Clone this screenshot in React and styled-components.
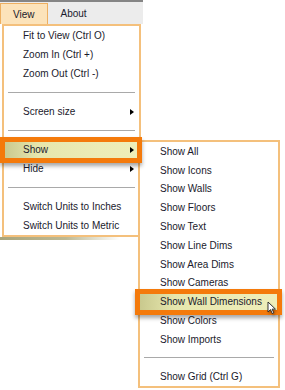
import styled, { createGlobalStyle } from "styled-components";

const GlobalStyle = createGlobalStyle`
  html, body {
    margin: 0;
    padding: 0;
    background: #fff;
  }
  body {
    font-family: "Liberation Sans", Arial, sans-serif;
    width: 285px;
    height: 390px;
    overflow: hidden;
  }
`;

const mainItems = [
  { label: "Fit to View (Ctrl O)" },
  { label: "Zoom In (Ctrl +)" },
  { label: "Zoom Out (Ctrl -)" },
  { sep: true },
  { label: "Screen size", arrow: true },
  { sep: true },
  { label: "Show", arrow: true, active: true, open: true },
  { label: "Hide", arrow: true },
  { sep: true },
  { label: "Switch Units to Inches" },
  { label: "Switch Units to Metric" },
];

const showItems = [
  { label: "Show All" },
  { label: "Show Icons" },
  { label: "Show Walls" },
  { label: "Show Floors" },
  { label: "Show Text" },
  { label: "Show Line Dims" },
  { label: "Show Area Dims" },
  { label: "Show Cameras" },
  { label: "Show Wall Dimensions", active: true, cursor: true },
  { label: "Show Colors" },
  { label: "Show Imports" },
  { sep: true },
  { label: "Show Grid (Ctrl G)" },
];

const Cursor = () => (
  <CursorIcon width="10" height="14" viewBox="0 0 10 14">
    <path
      d="M1 1 L1 11 L3.5 8.6 L5.3 12.6 L6.8 11.9 L5.1 8.1 L8.4 8.1 Z"
      fill="#fff"
      stroke="#222"
      strokeWidth="0.9"
      strokeLinejoin="round"
    />
  </CursorIcon>
);

const SubMenu = () => (
  <SubPanel>
    {showItems.map((item, i) =>
      item.sep ? (
        <Separator key={i} $h={18.8} />
      ) : (
        <SubItem key={i} $active={item.active}>
          {item.label}
          {item.cursor && <Cursor />}
        </SubItem>
      )
    )}
  </SubPanel>
);

export default function App() {
  return (
    <>
      <GlobalStyle />
      <Page>
        <MenuBar>
          <Tab $open>View</Tab>
          <Tab>About</Tab>
        </MenuBar>
        <DeskStrip />
        <MainPanel>
          {mainItems.map((item, i) =>
            item.sep ? (
              <Separator key={i} $h={19} />
            ) : (
              <MainItem key={i} $active={item.active}>
                <span>{item.label}</span>
                {item.arrow && <Arrow />}
                {item.open && <SubMenu />}
              </MainItem>
            )
          )}
        </MainPanel>
      </Page>
    </>
  );
}

const Page = styled.div`
  position: relative;
  width: 285px;
  height: 390px;
  background: #fff;
`;

const MenuBar = styled.div`
  display: flex;
  align-items: stretch;
  width: 143px;
  height: 24px;
  box-sizing: border-box;
  border-top: 2px solid #858585;
  padding-top: 1px;
  background: #ececec;
`;

const Tab = styled.div`
  display: flex;
  align-items: center;
  padding: 0 13px;
  font-size: 10px;
  color: #1a1a2c;
  box-sizing: border-box;
  ${(p) =>
    p.$open &&
    `
    background: #fce3ba;
    border: 1px solid #eeb061;
    border-bottom: none;
    padding: 0 12px;
  `}
`;

const DeskStrip = styled.div`
  margin-top: 213px;
  width: 120px;
  height: 3px;
  background: linear-gradient(to right, #a9a57c, #bdb994 55%, rgba(255, 255, 255, 0));
`;

const MainPanel = styled.div`
  position: absolute;
  top: 24px;
  left: 2px;
  width: 139px;
  box-sizing: border-box;
  border: 2px solid #f4c07c;
  background: #fff;
  z-index: 2;
`;

const rowBase = `
  position: relative;
  display: flex;
  align-items: center;
  box-sizing: border-box;
  font-size: 10px;
  color: #1a1a2c;
  white-space: nowrap;
`;

const activeFill = `
  background: linear-gradient(to right, #c9c98e, #e6e6ad 25%, #ececb6 70%, #eeeeba);
`;

const MainItem = styled.div`
  ${rowBase}
  height: 19px;
  padding: 0 5px 0 19px;
  justify-content: space-between;
  ${(p) => p.$active && activeFill}
  ${(p) =>
    p.$active &&
    `
    &::after {
      content: "";
      position: absolute;
      top: -3px;
      bottom: -4px;
      left: -4px;
      right: -3px;
      border: 5px solid #f47a0b;
      box-shadow: 0 3px 4px rgba(0, 0, 0, 0.35);
      pointer-events: none;
      z-index: 10;
    }
  `}
`;

const Arrow = styled.i`
  width: 0;
  height: 0;
  border-left: 4px solid #000;
  border-top: 3.5px solid transparent;
  border-bottom: 3.5px solid transparent;
`;

const Separator = styled.div`
  height: ${(p) => p.$h}px;
  display: flex;
  align-items: center;
  padding: 0 4px;

  &::before {
    content: "";
    flex: 1;
    border-top: 1px solid #a9a9a9;
    border-bottom: 1px solid #fff;
  }
`;

const SubPanel = styled.div`
  position: absolute;
  top: 0;
  left: calc(100% - 1px);
  width: 142px;
  box-sizing: border-box;
  border: 2px solid #f4c07c;
  background: #fff;
  z-index: 5;
`;

const SubItem = styled.div`
  ${rowBase}
  height: 18.8px;
  padding-left: 20px;
  ${(p) => p.$active && activeFill}
  ${(p) =>
    p.$active &&
    `
    &::after {
      content: "";
      position: absolute;
      top: -3px;
      bottom: -4px;
      left: -5px;
      right: -4px;
      border: 5px solid #f47a0b;
      box-shadow: 0 3px 4px rgba(0, 0, 0, 0.35);
      pointer-events: none;
      z-index: 10;
    }
  `}
`;

const CursorIcon = styled.svg`
  position: absolute;
  left: 127px;
  top: 9px;
  z-index: 11;
  filter: drop-shadow(1px 2px 1px rgba(0, 0, 0, 0.3));
`;
